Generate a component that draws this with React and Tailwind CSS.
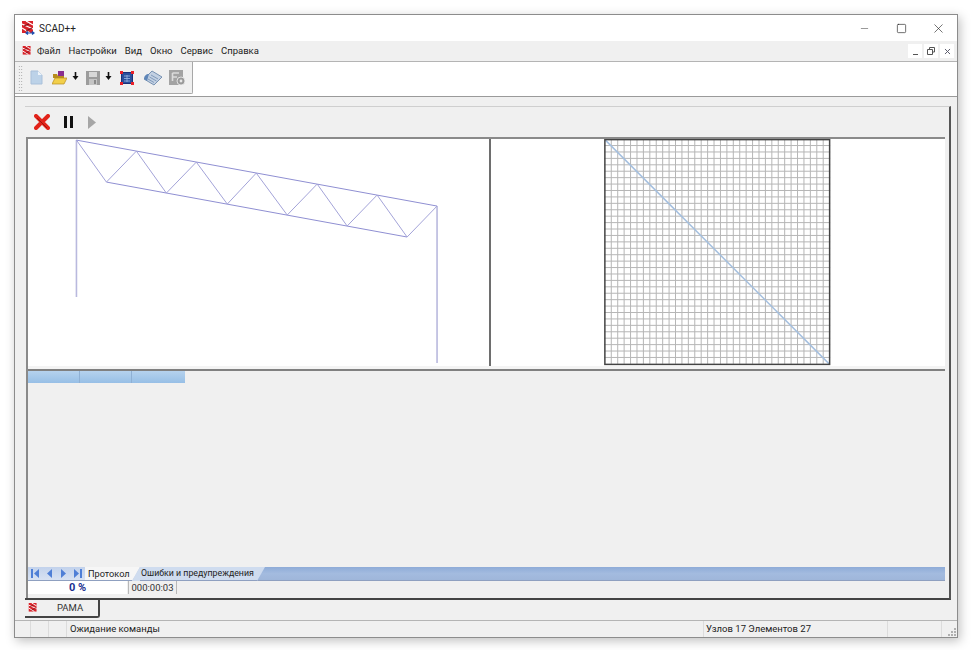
import { Minus, Square, X } from "lucide-react";

const menuItems = ["Файл", "Настройки", "Вид", "Окно", "Сервис", "Справка"];

const top = [[76, 140], [136, 151], [196, 162], [256, 173], [317, 184], [377, 195], [437, 206]];
const bottom = [[106, 182], [166, 193], [227, 204], [287, 215], [347, 226], [407, 237]];

const ScadLogo = ({ size = 14, arrow = true }) => (
  <svg width={size} height={size} viewBox="0 0 14 14">
    <rect x="1" y="0" width="11" height="12" fill="#d8232a" />
    <path d="M1 3 L12 8 M1 7 L9 12 M5 0 L12 4" stroke="#fff" strokeWidth="1.3" />
    <path d="M3 5 L8 3 M5 10 L11 7" stroke="#7a1015" strokeWidth="1" />
    {arrow && <path d="M5 12 H13 M7 10.5 L5 12 L7 13.5 M11 10.5 L13 12 L11 13.5" stroke="#1d4fb0" strokeWidth="1.2" fill="none" />}
  </svg>
);

const DownArrow = () => (
  <svg width="7" height="9" viewBox="0 0 7 9">
    <path d="M3.5 0 V5" stroke="#111" strokeWidth="1.6" />
    <path d="M0.5 4 H6.5 L3.5 8 Z" fill="#111" />
  </svg>
);

const Toolbar = () => (
  <div className="w-[178px] h-[32px] bg-[#f0f0f0] border-r border-b border-[#a8a8a8] rounded-br-[2px] flex items-center pl-[3px]">
    <div className="w-[5px] h-[26px] bg-[radial-gradient(#a0a0a0_0.7px,transparent_0.8px)] bg-[length:2.5px_3px]" />
    <svg className="ml-[7px]" width="13" height="15" viewBox="0 0 13 15">
      <path d="M1 1 H8 L12 5 V14 H1 Z" fill="#bcd2e8" stroke="#a9c0da" />
      <path d="M8 1 V5 H12 Z" fill="#eef4fa" />
    </svg>
    <svg className="ml-[9px]" width="15" height="14" viewBox="0 0 15 14">
      <path d="M6 0 H12 V5 H6 Z" fill="#8a2f8f" />
      <path d="M1 3 H5 L6 5 H12 V7 H1 Z" fill="#b88d1c" />
      <path d="M3 7 H15 L12 13 H0 Z" fill="#f2cf4a" stroke="#b88d1c" strokeWidth="0.7" />
    </svg>
    <div className="ml-[5px] mb-[3px] flex"><DownArrow /></div>
    <svg className="ml-[7px]" width="14" height="14" viewBox="0 0 14 14">
      <rect width="14" height="14" fill="#9c9c9c" />
      <rect x="3" y="1" width="8" height="5" fill="#d8d8d8" />
      <rect x="3" y="8" width="8" height="6" fill="#c4c4c4" />
      <rect x="8" y="9" width="2" height="4" fill="#8a8a8a" />
    </svg>
    <div className="ml-[5px] mb-[3px] flex"><DownArrow /></div>
    <svg className="ml-[8px]" width="14" height="14" viewBox="0 0 14 14">
      <rect x="1.5" y="1.5" width="11" height="11" fill="#2a4f9c" stroke="#1b2f7a" />
      <path d="M4 5 H10 M4 7.5 H10 M4 10 H10 M7 4 V11" stroke="#9db8e6" strokeWidth="0.8" />
      <path d="M0 0 H3 V3 H0 Z M11 0 H14 V3 H11 Z M0 11 H3 V14 H0 Z M11 11 H14 V14 H11 Z" fill="#e8202a" />
    </svg>
    <svg className="ml-[10px]" width="18" height="16" viewBox="0 0 18 16">
      <path d="M0 9 L8 1 L18 7 L10 15 Z" fill="#c2d0e2" stroke="#5f7da5" strokeWidth="0.8" />
      <path d="M0 9 C0 6 2 4 5 4 L3 11 Z" fill="#5f86b8" />
      <path d="M7 5 L14 9 M5.5 7 L12.5 11 M4 9 L10 12.5" stroke="#6f8cb0" strokeWidth="0.8" />
    </svg>
    <svg className="ml-[7px]" width="17" height="16" viewBox="0 0 17 16">
      <rect x="0" y="0" width="14" height="15" fill="#a3a3a3" />
      <path d="M3.5 3 H10 M3.5 3 V11 M3.5 7 H8" stroke="#dcdcdc" strokeWidth="1.6" />
      <circle cx="12" cy="11" r="4" fill="#9a9a9a" stroke="#f0f0f0" strokeWidth="0.8" />
      <circle cx="12" cy="11" r="1.4" fill="#e8e8e8" />
    </svg>
  </div>
);

const TrussView = () => (
  <svg className="block" width="461" height="227" viewBox="27.5 139 461 227">
    <path d="M76 140 V297 M437 206 V363" stroke="#b9b9de" strokeWidth="1.6" fill="none" />
    <path d="M76 140 L437 206 M106 182 L407 237" stroke="#8f8fd2" strokeWidth="1" fill="none" />
    {bottom.map(([x, y], i) => (
      <path
        key={x}
        d={`M${top[i][0]} ${top[i][1]} L${x} ${y} L${top[i + 1][0]} ${top[i + 1][1]}`}
        stroke="#a3a3d8"
        strokeWidth="1"
        fill="none"
      />
    ))}
  </svg>
);

const MatrixView = () => {
  const cells = Array.from({ length: 34 }, (_, i) => 604.5 + ((i + 1) * 225) / 35);
  return (
    <svg className="block" width="455" height="227" viewBox="490.5 139 455 227">
      {cells.map((v) => (
        <path key={v} d={`M${v} 139 V364 M604 ${v - 465.5} H830`} stroke="#b6b6b6" strokeWidth="1" />
      ))}
      <path d="M605 140 L829 364" stroke="#a4bfdf" strokeWidth="1.5" />
      <rect x="604.5" y="139.5" width="225" height="225" fill="none" stroke="#444" strokeWidth="1.5" />
    </svg>
  );
};

const NavArrow = ({ d }) => (
  <svg width="11" height="11" viewBox="0 0 11 11" fill="#4f7fd6">
    <path d={d} />
  </svg>
);

const BottomTabs = () => (
  <div className="h-[14px] shrink-0 flex bg-gradient-to-b from-[#8facd8] via-[#a3bbdf] to-[#9fb6da] border-b border-[#8fa0c0]">
    <div className="w-[57px] flex items-center justify-around px-[1px] bg-gradient-to-b from-[#c2d2ec] to-[#d8e2f2]">
      <NavArrow d="M1 1 H3 V10 H1 Z M9 1 V10 L4 5.5 Z" />
      <NavArrow d="M8 1 V10 L3 5.5 Z" />
      <NavArrow d="M3 1 V10 L8 5.5 Z" />
      <NavArrow d="M8 1 H10 V10 H8 Z M2 1 V10 L7 5.5 Z" />
    </div>
    <div className="w-[47px] bg-[#f6f6f6] text-[9.2px] leading-[13px] text-[#222] pl-[3px] whitespace-nowrap">Протокол</div>
    <svg width="8" height="14" viewBox="0 0 8 14" className="block">
      <path d="M0 14 L8 0 V14 Z" fill="#cfdcef" />
      <path d="M0 0 H8 L0 14 Z" fill="#f6f6f6" />
    </svg>
    <div className="w-[117px] bg-[#cfdcef] text-[8.8px] leading-[13px] text-[#222] pl-[1px] whitespace-nowrap">Ошибки и предупреждения</div>
    <svg width="8" height="14" viewBox="0 0 8 14" className="block">
      <path d="M0 0 H8 L0 14 Z" fill="#cfdcef" />
    </svg>
  </div>
);

export default function App() {
  return (
    <div
      className="w-[974px] h-[650px] bg-white pl-[14px] pt-[14px] overflow-hidden text-[#1a1a1a]"
      style={{ fontFamily: "Roboto, sans-serif" }}
    >
      <div className="w-[944px] h-[624px] border border-[#8c8c8c] bg-[#f0f0f0] flex flex-col shadow-[2px_3px_10px_rgba(0,0,0,0.25)]">
        {/* Title bar */}
        <div className="h-[26px] bg-white flex items-center shrink-0">
          <div className="ml-[6px] flex"><ScadLogo /></div>
          <span className="ml-[4px] text-[10px] text-[#222]">SCAD++</span>
          <div className="ml-auto flex items-center">
            <div className="w-[37px] flex justify-center"><Minus size={11} strokeWidth={1} color="#222" /></div>
            <div className="w-[37px] flex justify-center"><Square size={11} strokeWidth={1.4} color="#222" /></div>
            <div className="w-[37px] flex justify-center"><X size={15} strokeWidth={1} color="#222" /></div>
          </div>
        </div>

        {/* Menu */}
        <div className="h-[21px] flex items-center shrink-0 border-b border-[#b4b4b4] pl-[7px]">
          <ScadLogo size={10} arrow={false} />
          <div className="ml-[5px] flex gap-[8px] text-[9.5px] text-[#222]">
            {menuItems.map((item) => (
              <span key={item}>{item}</span>
            ))}
          </div>
          <div className="ml-auto mr-[3px] flex gap-[2px]">
            <div className="w-[14px] h-[14px] bg-white flex items-end justify-center pb-[3px]"><div className="w-[5px] h-[1px] bg-[#555]" /></div>
            <div className="w-[14px] h-[14px] bg-white flex items-center justify-center">
              <svg width="8" height="8" viewBox="0 0 8 8" fill="none" stroke="#555"><path d="M2.5 2 V.5 H7.5 V5 H6 M.5 2.5 H5.5 V7.5 H.5 Z" /></svg>
            </div>
            <div className="w-[14px] h-[14px] bg-white flex items-center justify-center">
              <X size={9} strokeWidth={2.5} color="#556" />
            </div>
          </div>
        </div>

        {/* Toolbar band */}
        <div className="h-[35px] bg-white shrink-0 border-b border-[#9a9a9a]">
          <Toolbar />
        </div>

        {/* Client area */}
        <div className="flex-1 flex flex-col min-h-0">
          <div className="mt-[9px] ml-[10px] w-[926px] h-[494px] flex flex-col border-t border-[#cfcfcf] border-r-2 border-r-[#555] border-b-2 border-b-[#444] pl-[1px] pr-[4px]">
            <div className="h-[30px] shrink-0 flex items-center pl-[8px]">
              <svg width="16" height="16" viewBox="0 0 16 16">
                <path d="M2 2 L14 14 M14 2 L2 14" stroke="#e2231a" strokeWidth="4" strokeLinecap="round" />
                <path d="M3 4 L13 14" stroke="#8c120d" strokeWidth="0.8" />
              </svg>
              <div className="ml-[14px] flex gap-[3px]">
                <div className="w-[3px] h-[12px] bg-[#111]" />
                <div className="w-[3px] h-[12px] bg-[#111]" />
              </div>
              <svg className="ml-[15px]" width="8" height="13" viewBox="0 0 8 13"><path d="M0 0 L8 6.5 L0 13 Z" fill="#a6a6a6" /></svg>
            </div>

            <div className="flex-1 min-h-0 flex flex-col border-l-2 border-[#8a8a8a]">
              <div className="h-[2px] shrink-0 bg-[#8a8a8a]" />
              <div className="flex shrink-0 bg-white">
                <TrussView />
                <div className="w-[2px] bg-[#6e6e6e]" />
                <MatrixView />
              </div>
              <div className="h-[3px] shrink-0 bg-[#f4f4f4]" />
              <div className="h-[2px] shrink-0 bg-[#808080]" />
              <div className="h-[12px] w-[157px] shrink-0 flex bg-gradient-to-b from-[#b5d2ee] to-[#97bfe6]">
                <div className="w-[52px] border-r border-[#8fb0d4]" />
                <div className="w-[52px] border-r border-[#8fb0d4]" />
              </div>
              <div className="flex-1" />
              <BottomTabs />
              <div className="h-[13px] shrink-0 flex text-[10px] leading-[13px]">
                <div className="w-[99px] bg-white text-center font-bold text-[#1a2f8f] text-[11px]">0 %</div>
                <div className="w-[49px] ml-[1px] border-x border-[#b8b8b8] text-center text-[#333] text-[9.5px] whitespace-nowrap">000:00:03</div>
              </div>
              <div className="h-[4px] shrink-0" />
            </div>
          </div>

          {/* Document tab */}
          <div className="ml-[10px] h-[18px] w-[75px] flex items-center border-r-2 border-b-2 border-[#444] rounded-br-[3px]">
            <div className="ml-[3px] flex"><ScadLogo size={10} arrow={false} /></div>
            <span className="ml-[19px] text-[9.5px] text-[#333]">РАМА</span>
          </div>
          <div className="flex-1" />

          {/* Status bar */}
          <div className="h-[17px] shrink-0 border-t border-[#b4b4b4] flex text-[9.5px] leading-[16px] text-[#222]">
            <div className="w-[16px] border-r border-[#dcdcdc]" />
            <div className="w-[18px] border-r border-[#dcdcdc]" />
            <div className="w-[18px] border-r border-[#dcdcdc]" />
            <div className="w-[637px] pl-[3px] border-r border-[#dcdcdc]">Ожидание команды</div>
            <div className="w-[184px] pl-[2px] border-r border-[#dcdcdc] whitespace-nowrap">Узлов 17 Элементов 27</div>
            <div className="w-[54px] border-r border-[#dcdcdc]" />
            <div className="flex-1 flex items-end justify-end pr-[1px] pb-[1px]">
              <svg width="8" height="8" viewBox="0 0 8 8" fill="#b0b0b0">
                <path d="M6 0 H8 V2 H6 Z M3 3 H5 V5 H3 Z M6 3 H8 V5 H6 Z M0 6 H2 V8 H0 Z M3 6 H5 V8 H3 Z M6 6 H8 V8 H6 Z" />
              </svg>
            </div>
          </div>
        </div>
      </div>
    </div>
  );
}
